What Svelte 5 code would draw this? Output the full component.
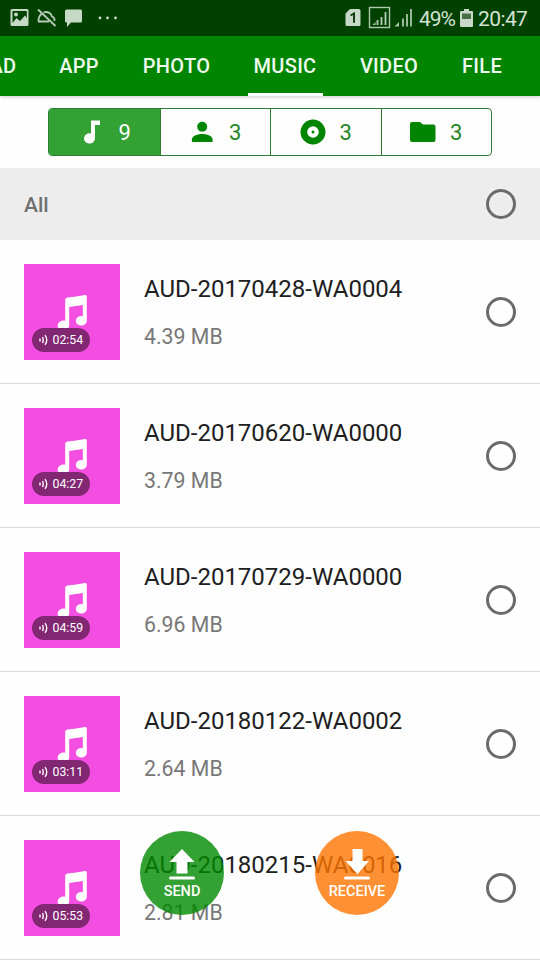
<script>
  const tabs = [
    { label: 'AD', width: 26 },
    { label: 'APP', width: 41 },
    { label: 'PHOTO', width: 69 },
    { label: 'MUSIC', width: 63, active: true },
    { label: 'VIDEO', width: 60 },
    { label: 'FILE', width: 41 }
  ];
  const filters = [
    { icon: 'note', count: 9 },
    { icon: 'person', count: 3 },
    { icon: 'disc', count: 3 },
    { icon: 'folder', count: 3 }
  ];
  const tracks = [
    { name: 'AUD-20170428-WA0004', size: '4.39 MB', time: '02:54' },
    { name: 'AUD-20170620-WA0000', size: '3.79 MB', time: '04:27' },
    { name: 'AUD-20170729-WA0000', size: '6.96 MB', time: '04:59' },
    { name: 'AUD-20180122-WA0002', size: '2.64 MB', time: '03:11' },
    { name: 'AUD-20180215-WA0016', size: '2.81 MB', time: '05:53' }
  ];
</script>

<div class="screen">
  <header class="status">
    <svg class="notices" width="120" height="36" viewBox="0 0 120 36">
      <path fill="#c6d8c6" fill-rule="evenodd" d="M12 9h15a1.500 1.500 0 0 1 1.500 1.500v14a1.500 1.500 0 0 1-1.500 1.500H12a1.500 1.500 0 0 1-1.500-1.500v-14A1.500 1.500 0 0 1 12 9zM12.500 11v12l4-5 3.500 3 5-5.500 1.800 2.500v-7z" />
      <circle cx="16" cy="14.500" r="2" fill="#c6d8c6" />
      <path fill="none" stroke="#b5cbb5" stroke-width="1.800" d="M38 9.500l17.500 16.500M38.500 21.500c-.3-4 1-6.300 3.800-8.300M38 21.500h11M43.500 12.500c4-1.500 7.500.5 8.500 4 2 .7 3 2.500 2.300 4.500" />
      <path fill="#c6d8c6" d="M66.500 9.500h14a1.500 1.500 0 0 1 1.500 1.500v10a1.500 1.500 0 0 1-1.500 1.500H71L67 27v-4.500h-.5A1.500 1.500 0 0 1 65 21V11a1.500 1.500 0 0 1 1.500-1.500z" />
      <g fill="#c6d8c6"><circle cx="100" cy="18" r="1.400" /><circle cx="107.500" cy="18" r="1.400" /><circle cx="115.500" cy="18" r="1.400" /></g>
    </svg>
    <div class="system">
      <svg width="70" height="36" viewBox="0 0 70 36">
        <path fill="#c9d9c9" d="M5 9h9a1.500 1.500 0 0 1 1.500 1.500v14A1.500 1.500 0 0 1 14 26H2a1.500 1.500 0 0 1-1.500-1.500v-11z" />
        <path fill="none" stroke="#123f12" stroke-width="2" d="M5.500 15.500L9 13.500v9.200" />
        <rect x="24.500" y="7.500" width="20" height="20" fill="none" stroke="#b0c8b0" stroke-width="1.400" />
        <path stroke="#b5ceb5" stroke-width="1.800" d="M32.500 25v-5M36.500 25v-8M40.500 25V12" />
        <path stroke="#a9c5a9" stroke-width="1.800" d="M58 26.500v-8M62 26.500V14M66 26.500V9" />
        <path fill="#a9c5a9" d="M27.500 25l3-3v3zM49.500 26.500l4.500-4.500v4.500z" />
      </svg>
      <span class="percent">49%</span>
      <svg class="battery" width="13" height="18" viewBox="0 0 13 18">
        <path fill="#c9d9c9" d="M4 0h5v2h3a1 1 0 0 1 1 1v14a1 1 0 0 1-1 1H1a1 1 0 0 1-1-1V3a1 1 0 0 1 1-1h3z" />
        <path fill="#477047" d="M2 4.500h9V10H2z" />
      </svg>
      <span class="clock">20:47</span>
    </div>
  </header>

  <nav class="tabs">
    {#each tabs as tab}
      <span class="tab" class:active={tab.active} style:width="{tab.width}px">{tab.label}</span>
    {/each}
  </nav>

  <div class="filter-area">
    <div class="filters">
      {#each filters as filter, i}
        <div class="filter" class:selected={i === 0}>
          <svg width="26" height="26" viewBox="0 0 26 26" fill="currentColor">
            {#if filter.icon === 'note'}
              <path d="M12 1.500H21v4.500h-5v13.300a5.500 5.200 0 1 1-4-4.900z" />
            {:else if filter.icon === 'person'}
              <circle cx="13.200" cy="7.800" r="5" /><path d="M2.900 23v-2.500c0-3.800 6.500-5.500 10.300-5.500s10.400 1.700 10.400 5.500V23z" />
            {:else if filter.icon === 'disc'}
              <path fill-rule="evenodd" d="M13 .5a12.500 12.500 0 1 0 0 25 12.500 12.500 0 0 0 0-25zm0 6.700a5.800 5.800 0 1 1 0 11.600 5.800 5.800 0 0 1 0-11.600z" /><circle cx="13" cy="13" r="1.500" />
            {:else}
              <path d="M2 3H10l3 2.500h10.500a2 2 0 0 1 2 2V21a2 2 0 0 1-2 2H2a2 2 0 0 1-2-2V5a2 2 0 0 1 2-2z" />
            {/if}
          </svg>
          <span>{filter.count}</span>
        </div>
      {/each}
    </div>
  </div>

  <div class="all"><span>All</span><i class="radio"></i></div>

  <main>
    {#each tracks as track}
      <article>
        <div class="thumb">
          <svg width="96" height="96" viewBox="0 0 96 96">
            <path transform="translate(0 .8)" fill="#fff" fill-rule="evenodd" d="M43.500 32.800Q52 31.700 61 30.200Q62.800 29.900 62.800 31.500V56a5.500 4.700 0 1 1-4-4.500V40.200L45.200 42.200V60.500a5.800 5 0 1 1-4-4.500V35Q41.200 33 43.500 32.800z" />
          </svg>
          <div class="duration">
            <svg width="10" height="12" viewBox="0 0 10 12" fill="none" stroke="#fff" stroke-width="1.400"><path d="M1 4.500v3M3.500 3q1.500 3 0 6M6 1.200q3.500 4.800 0 9.600" /></svg>
            <span>{track.time}</span>
          </div>
        </div>
        <div class="info">
          <div class="name">{track.name}</div>
          <div class="size">{track.size}</div>
        </div>
        <i class="radio"></i>
      </article>
    {/each}
  </main>

  <button class="action send">
    <svg width="26" height="31" viewBox="0 0 26 31" fill="#fff"><path d="M13 0L25.500 13H18.500v11.500h-11V13H.500zM1.500 27.500h23a1.500 1.500 0 0 1 0 3h-23a1.500 1.500 0 0 1 0-3z" /></svg>
    <span>SEND</span>
  </button>
  <button class="action receive">
    <svg width="26" height="31" viewBox="0 0 26 31" fill="#fff"><path d="M8.500 0h10v12h6.500L13.500 25 1.500 12h7zM1.500 27.500h23a1.500 1.500 0 0 1 0 3h-23a1.500 1.500 0 0 1 0-3z" /></svg>
    <span>RECEIVE</span>
  </button>
</div>

<style>
  :global(body) { margin: 0; background: #fefefe; }
  .screen { position: relative; width: 540px; height: 960px; overflow: hidden; background: #fefefe; font-family: Roboto, sans-serif; }
  svg { display: block; flex: none; }
  .status { height: 36px; background: #004100; display: flex; justify-content: space-between; }
  .system { display: flex; align-items: center; width: 195px; color: #d5e3d5; }
  .percent, .clock { font-size: 21px; line-height: 36px; white-space: nowrap; padding-top: 2px; }
  .percent { width: 37px; margin-left: 4px; letter-spacing: -1px; }
  .battery { margin-left: 4px; }
  .clock { margin-left: 5px; letter-spacing: -0.6px; }
  .tabs { height: 60px; background: #008500; display: flex; justify-content: flex-end; gap: 42.500px; padding-right: 37.500px; box-sizing: border-box; box-shadow: 0 1px 4px rgba(0, 0, 0, .2); }
  .tab { position: relative; flex: none; display: flex; justify-content: center; color: #effaef; font-size: 20px; font-weight: 500; line-height: 60px; letter-spacing: .3px; }
  .tab.active::after { content: ''; position: absolute; left: -6px; right: -6px; bottom: 0; height: 3px; background: #fff; }
  .filter-area { height: 72px; display: flex; justify-content: center; align-items: center; }
  .filters { width: 444px; height: 48px; box-sizing: border-box; display: flex; border: 1px solid #2d7e33; border-radius: 4px; overflow: hidden; }
  .filter { flex: 1; display: flex; justify-content: center; align-items: center; gap: 14px; color: #008500; border-left: 1px solid #2d7e33; }
  .filter:first-child { border-left: 0; padding-left: 1px; }
  .filter span { font-size: 22px; color: #238429; padding-top: 1px; }
  .selected { background: #33a133; color: #fff; }
  .filter.selected span { color: #fff; }
  .all { height: 72px; background: #ededed; display: flex; justify-content: space-between; align-items: center; padding: 0 24px; }
  .all span { font-size: 21px; font-weight: 500; color: #707070; padding-top: 2px; }
  .radio { flex: none; width: 30px; height: 30px; border: 3px solid #6b6b6b; border-radius: 50%; box-sizing: border-box; }
  article { height: 144px; box-sizing: border-box; border-bottom: 1px solid #dadada; display: flex; align-items: center; padding: 0 24px; }
  .thumb { position: relative; width: 96px; height: 96px; background: #f44de1; }
  .duration { position: absolute; left: 7.500px; bottom: 7.500px; width: 58px; height: 24px; border-radius: 12px; background: #822873; display: flex; align-items: center; color: #fff; padding-left: 7px; box-sizing: border-box; gap: 4px; font-size: 12.300px; }
  .info { flex: 1; margin-left: 24px; height: 96px; white-space: nowrap; }
  .name { font-size: 24px; line-height: 30px; margin-top: 10px; color: #202020; }
  .size { font-size: 21.300px; line-height: 26px; margin-top: 20px; color: #777; }
  .action { position: absolute; top: 831px; width: 84px; height: 84px; border: 0; border-radius: 50%; padding: 18px 0 0; color: #fff; font: 500 14.500px/18px Roboto, sans-serif; display: flex; flex-direction: column; align-items: center; gap: 3px; }
  .send { left: 140px; background: rgba(0, 138, 0, .8); }
  .receive { left: 315px; background: rgba(255, 116, 0, .8); }
</style>
